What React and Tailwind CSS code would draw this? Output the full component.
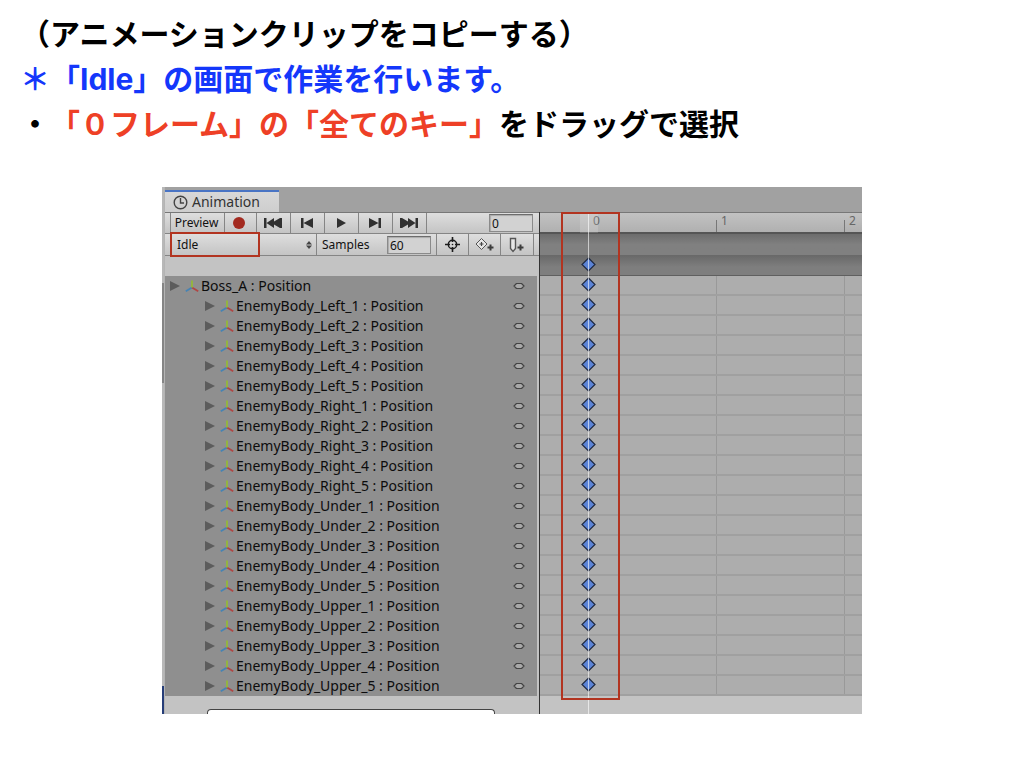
const SIDES = ['Left', 'Right', 'Under', 'Upper']

const TRACKS = [
  { name: 'Boss_A', child: false },
  ...SIDES.flatMap((side) =>
    [1, 2, 3, 4, 5].map((n) => ({ name: `EnemyBody_${side}_${n}`, child: true }))
  ),
]

const SECONDS = [0, 1, 2]

const TOOL_BUTTON =
  'flex items-center justify-center border-r border-[#858585] bg-gradient-to-b from-[#dedede] to-[#c4c4c4]'
const FIELD =
  'h-[18px] w-11 border border-[#8a8a8a] border-t-[#6c6c6c] bg-[#d2d2d2] px-0.5 text-xs leading-4 text-[#111] shadow-[inset_1px_1px_1px_#aaa] outline-none'

function ClockIcon() {
  return (
    <svg width="15" height="15" viewBox="0 0 15 15" fill="none" stroke="#444" aria-hidden="true">
      <circle cx="7.5" cy="7.5" r="6.3" strokeWidth="1.4" />
      <path d="M7.5 3v5H11" strokeWidth="1.4" />
    </svg>
  )
}

function PlayerIcon({ d, width }) {
  return (
    <svg width={width} height="12" viewBox={`0 0 ${width} 12`} fill="#303030" aria-hidden="true">
      <path d={d} />
    </svg>
  )
}

const PLAYER = [
  { label: 'First frame', width: 18, d: 'M0 1h2.500v10H0zM2.500 6L10 1v3.600L16 1h2v10h-2l-6-3.600V11z' },
  { label: 'Previous keyframe', width: 12, d: 'M0 1h2.5v10H0zM2.5 6L12 1v10z' },
  { label: 'Play', width: 9, d: 'M0 1l9 5-9 5z' },
  { label: 'Next keyframe', width: 12, d: 'M0 1l9.5 5L0 11zM9.5 1H12v10H9.5z' },
  { label: 'Last frame', width: 18, d: 'M18 1h-2.500v10H18zM15.500 6L8 1v3.600L2 1H0v10h2l6-3.600V11z' },
]

function TargetIcon() {
  return (
    <svg width="15" height="15" viewBox="0 0 15 15" fill="none" stroke="#1c1c1c" aria-hidden="true">
      <circle cx="7.5" cy="7.5" r="4.2" strokeWidth="1.4" />
      <path d="M7.5 0v5M7.5 10v5M0 7.5h5M10 7.5h5" strokeWidth="1.6" />
      <circle cx="7.5" cy="7.5" r=".8" fill="#1c1c1c" stroke="none" />
    </svg>
  )
}

function AddKeyIcon() {
  return (
    <svg width="20" height="16" viewBox="0 0 20 16" fill="none" aria-hidden="true">
      <path d="M6.500 1.500L12 7l-5.500 5.500L1 7z" fill="#e6e6e6" stroke="#555" />
      <path d="M6.500 5v4M4.500 7h4" stroke="#444" strokeWidth="1.2" />
      <path d="M15.500 7.500v6M12.500 10.500h6" stroke="#3c3c3c" strokeWidth="2" />
    </svg>
  )
}

function AddEventIcon() {
  return (
    <svg width="16" height="16" viewBox="0 0 16 16" fill="none" aria-hidden="true">
      <path d="M1.5 1.5h5v10l-2.5 3-2.5-3z" fill="#e6e6e6" stroke="#555" strokeWidth="1.4" />
      <path d="M11.5 7.5v6M8.5 10.5h6" stroke="#3c3c3c" strokeWidth="2" />
    </svg>
  )
}

function AxesIcon() {
  return (
    <svg width="14" height="13" viewBox="0 0 14 13" fill="none" strokeWidth="1.8" aria-hidden="true">
      <path d="M7 7.500L.8 11.300" stroke="#4683b4" />
      <path d="M7 7.500l6.200 3.800" stroke="#b04644" />
      <path d="M7 .5v7" stroke="#93b838" />
    </svg>
  )
}

function Keyframe() {
  return (
    <svg width="15" height="15" viewBox="0 0 15 15" aria-hidden="true">
      <path d="M7.5 1L14 7.5 7.5 14 1 7.5z" fill="#5b83d6" stroke="#1f2940" strokeWidth="1.2" />
    </svg>
  )
}

function Notes() {
  return (
    <div className="px-5 pt-2.5 font-['Noto_Sans_CJK_JP',sans-serif] text-[30px] leading-[45px] font-bold text-black [text-spacing-trim:space-all]">
      <h1>（アニメーションクリップをコピーする）</h1>
      <p className="text-[#1437fb]">
        ＊「<span className="font-['Inter',sans-serif] leading-none">Idle</span>」の画面で作業を行います。
      </p>
      <p>
        ・<span className="text-[#ee4026]">「０フレーム」の「全てのキー」</span>をドラッグで選択
      </p>
    </div>
  )
}

function Toolbar() {
  return (
    <>
      <div className="flex h-[22px] border-y border-[#858585] border-t-[#777] bg-gradient-to-b from-[#dedede] to-[#c4c4c4] pl-[5px]">
        <button type="button" className={`${TOOL_BUTTON} w-[55px] border-l pr-0.5 text-xs text-[#111]`}>
          Preview
        </button>
        <button type="button" aria-label="Record" className={`${TOOL_BUTTON} w-8 pr-1`}>
          <span className="size-3 rounded-full bg-[#a32a20]" />
        </button>
        {PLAYER.map((item) => (
          <button key={item.label} type="button" aria-label={item.label} className={`${TOOL_BUTTON} w-[34px] pr-px`}>
            <PlayerIcon d={item.d} width={item.width} />
          </button>
        ))}
        <input aria-label="Current frame" defaultValue="0" className={`${FIELD} mt-px mr-1.5 ml-auto`} />
      </div>
      <div className="flex h-[22px] border-b border-[#858585] bg-gradient-to-b from-[#dedede] to-[#c4c4c4] pl-[5px]">
        <div className="relative flex w-[147px] border-x border-[#858585]">
          <select
            aria-label="Animation clip"
            className="w-full appearance-none pl-1.5 text-xs text-[#111] outline-none"
          >
            <option>Idle</option>
          </select>
          <svg
            width="6"
            height="8"
            viewBox="0 0 6 8"
            fill="#444"
            className="pointer-events-none absolute top-1/2 right-1 -translate-y-1/2"
            aria-hidden="true"
          >
            <path d="M0 3.5L3 0l3 3.5zM0 4.5h6L3 8z" />
          </svg>
          <div className="pointer-events-none absolute -top-0.5 -left-px h-[25px] w-[90px] border-2 border-[#b23420]" />
        </div>
        <label htmlFor="samples" className="w-[70px] pl-[5px] text-xs leading-[22px] text-[#111]">
          Samples
        </label>
        <input id="samples" defaultValue="60" className={`${FIELD} mt-0.5`} />
        <div className="mr-[5px] ml-auto flex">
          <button type="button" aria-label="Filter by selection" className={`${TOOL_BUTTON} w-[33px] border-l`}>
            <TargetIcon />
          </button>
          <button type="button" aria-label="Add keyframe" className={`${TOOL_BUTTON} w-8`}>
            <AddKeyIcon />
          </button>
          <button type="button" aria-label="Add event" className={`${TOOL_BUTTON} w-[33px]`}>
            <AddEventIcon />
          </button>
        </div>
      </div>
    </>
  )
}

function TrackList() {
  return (
    <ul className="mr-0.5 bg-[#8f8f8f]">
      {TRACKS.map((track) => (
        <li
          key={track.name}
          className={`flex h-5 items-center pr-3 text-sm text-[#0c0c0c] ${track.child ? 'pl-10' : 'pl-[5px]'}`}
        >
          <svg width="10" height="12" viewBox="0 0 10 12" fill="#5c5c5c" aria-hidden="true">
            <path d="M0 1l10 5-10 5z" />
          </svg>
          <span className="ml-[5px]">
            <AxesIcon />
          </span>
          <span className="ml-0.5 leading-5 whitespace-nowrap">{track.name} : Position</span>
          <svg width="12" height="8" viewBox="0 0 12 8" className="ml-auto" aria-hidden="true">
            <path
              d="M3.5 1.500h5L11 4 8.500 6.500h-5L1 4z"
              fill="#a8a8a8"
              stroke="#444"
              strokeWidth="1.2"
              strokeLinejoin="round"
            />
          </svg>
        </li>
      ))}
    </ul>
  )
}

function Timeline() {
  return (
    <div className="relative flex min-w-0 flex-1 flex-col overflow-hidden bg-[#c3c3c3]">
      <div className="flex h-[22px] border-t border-b-2 border-t-[#777] border-b-[#555] bg-gradient-to-b from-[#c2c2c2] to-[#b0b0b0] pl-12 text-xs">
        {SECONDS.map((second) => (
          <div key={second} className="flex w-32 shrink-0 items-end">
            <span className={second === 0 ? 'h-3 w-px' : 'h-3 w-px bg-[#777]'} />
            <span className="self-start pl-1 leading-4 text-[#666]">{second}</span>
          </div>
        ))}
      </div>
      <div className="h-[21px] bg-gradient-to-b from-[#6c6c6c] to-[#808080] to-50%" />
      <div className="flex h-[21px] items-center border-b border-[#5f5f5f] bg-gradient-to-b from-[#686868] to-[#7e7e7e] to-60% pb-0.5 pl-[41px]">
        <Keyframe />
      </div>
      {TRACKS.map((track) => (
        <div key={track.name} className="relative flex h-5 border-b-2 border-[#a0a0a0] bg-[#adadad] pl-12">
          {SECONDS.map((second) => (
            <div
              key={second}
              className={second === 0 ? 'w-32 shrink-0' : 'w-32 shrink-0 border-l border-[#999]'}
            />
          ))}
          <div className="absolute top-px left-[41px]">
            <Keyframe />
          </div>
        </div>
      ))}
      {/* playhead */}
      <div className="absolute top-px left-10 h-5 w-[18px] bg-white/15" />
      <div className="absolute top-px bottom-0 left-12 w-px bg-white/60" />
      {/* selected frame */}
      <div className="absolute top-0 bottom-3.5 left-[21px] w-[59px] border-2 border-[#b23420]" />
    </div>
  )
}

function AnimationWindow() {
  return (
    <section className="mx-auto mt-10.5 flex w-full max-w-[700px] bg-[#a1a1a1] font-['Noto_Sans',sans-serif]">
      <div className="flex w-[3px] shrink-0 flex-col border-r border-[#b4b4b4] bg-[#b8b8b8]">
        <div className="mt-24 h-[100px] bg-[#858585]" />
        <div className="mt-auto h-7 bg-[#263d78]" />
      </div>
      <div className="min-w-0 flex-1">
        <div className="flex h-[25px] items-end">
          <h2 className="flex h-[22px] w-[114px] items-center gap-1 border-t-2 border-[#4974c4] bg-gradient-to-b from-[#d8d8d8] to-[#cecece] pl-2 text-sm leading-5 text-[#333]">
            <ClockIcon />
            Animation
          </h2>
        </div>
        <div className="flex">
          <div className="flex w-[375px] shrink-0 flex-col border-r border-[#333] bg-[#c3c3c3]">
            <Toolbar />
            <div className="h-5" />
            <TrackList />
            <div className="flex h-[18px] items-end pr-11 pl-[42px]">
              <div className="h-[5px] w-full rounded-t border border-b-0 border-[#444] bg-white" />
            </div>
          </div>
          <Timeline />
        </div>
      </div>
    </section>
  )
}

export default function App() {
  return (
    <main className="min-h-screen bg-white">
      <Notes />
      <AnimationWindow />
    </main>
  )
}
